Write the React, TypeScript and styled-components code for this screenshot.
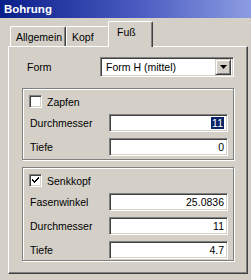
import React from "react";
import styled, { createGlobalStyle } from "styled-components";

const FACE = "#d4d0c8";
const SHADOW = "#808080";
const DARK = "#404040";

const GlobalStyle = createGlobalStyle`
  body {
    margin: 0;
    background: ${FACE};
    font-family: "Liberation Sans", Arial, sans-serif;
    font-size: 10.5px;
    color: #000;
  }
`;

const Window = styled.div`
  width: 251px;
  height: 280px;
  display: flex;
  flex-direction: column;
  background: ${FACE};
  overflow: hidden;
`;

const TitleBar = styled.div`
  height: 18px;
  display: flex;
  align-items: center;
  padding-left: 4px;
  background: linear-gradient(90deg, #0a1e8a 0%, #4a5cc0 55%, #8c9ce2 100%);
  color: #fff;
  font-weight: bold;
  font-size: 11.5px;
`;

const Body = styled.div`
  padding: 3px 3px 0 8px;
  display: flex;
  flex-direction: column;
`;

const TabRow = styled.div`
  display: flex;
  align-items: flex-end;
  height: 25px;
  padding-left: 2px;
  position: relative;
  z-index: 1;
`;

const Tab = styled.div<{ $active?: boolean; $width: number }>`
  width: ${(p) => p.$width}px;
  height: ${(p) => (p.$active ? 26 : 20)}px;
  margin: ${(p) => (p.$active ? "0 -2px -1px -2px" : "0")};
  padding: ${(p) => (p.$active ? "4px 0 0 8px" : "0 0 0 5px")};
  display: flex;
  align-items: ${(p) => (p.$active ? "flex-start" : "center")};
  box-sizing: border-box;
  background: ${FACE};
  border-top: 1px solid #fff;
  border-left: 1px solid #fff;
  border-right: 1px solid ${DARK};
  box-shadow: inset -1px 0 0 ${SHADOW}, inset 1px 1px 0 ${FACE};
  border-radius: 2px 2px 0 0;
`;

const Panel = styled.div`
  height: 228px;
  box-sizing: border-box;
  border-top: 1px solid #fff;
  border-left: 1px solid #fff;
  border-right: 1px solid ${DARK};
  border-bottom: 1px solid ${DARK};
  box-shadow: inset -1px -1px 0 ${SHADOW};
  padding: 10px 13px 0 13px;
  display: flex;
  flex-direction: column;
`;

const FormRow = styled.div`
  display: flex;
  align-items: center;
  justify-content: space-between;
  padding-left: 5px;
  margin-bottom: 11px;
`;

const Sunken = styled.div`
  box-sizing: border-box;
  background: #fff;
  border-top: 1px solid ${SHADOW};
  border-left: 1px solid ${SHADOW};
  border-right: 1px solid #fff;
  border-bottom: 1px solid #fff;
  box-shadow: inset 1px 1px 0 ${DARK}, inset -1px -1px 0 ${FACE};
`;

const Select = styled(Sunken)`
  width: 134px;
  height: 20px;
  display: flex;
  align-items: center;
  padding: 2px 2px 2px 5px;
`;

const SelectText = styled.span`
  flex: 1;
`;

const DropButton = styled.div`
  width: 16px;
  height: 16px;
  box-sizing: border-box;
  background: ${FACE};
  border-top: 1px solid ${FACE};
  border-left: 1px solid ${FACE};
  border-right: 1px solid ${DARK};
  border-bottom: 1px solid ${DARK};
  box-shadow: inset 1px 1px 0 #fff, inset -1px -1px 0 ${SHADOW};
  display: flex;
  align-items: center;
  justify-content: center;
`;

const Group = styled.div<{ $bottom: number }>`
  box-sizing: border-box;
  border: 1px solid ${SHADOW};
  box-shadow: inset 1px 1px 0 #fff, 1px 1px 0 #fff;
  padding: 6px 5px ${(p) => p.$bottom}px 7px;
  display: flex;
  flex-direction: column;
  gap: 6px;
  & + & {
    margin-top: 7px;
  }
`;

const CheckRow = styled.label`
  display: flex;
  align-items: center;
  gap: 5px;
  height: 13px;
  margin-left: -1px;
`;

const CheckBox = styled(Sunken)`
  width: 13px;
  height: 13px;
  display: flex;
  align-items: center;
  justify-content: center;
`;

const FieldRow = styled.div`
  display: flex;
  align-items: center;
  justify-content: space-between;
  height: 18px;
`;

const Field = styled(Sunken)`
  width: 119px;
  height: 18px;
  display: flex;
  align-items: center;
  justify-content: flex-end;
  padding-right: 3px;
`;

const Selected = styled.span`
  background: #0a246a;
  color: #fff;
  padding: 0 1px;
`;

const Check = () => (
  <svg width="7" height="7" viewBox="0 0 7 7">
    <path d="M0 2h1v1h1v1h1V3h1V2h1V1h1V0h1v2H6v1H5v1H4v1H3v1H2V5H1V4H0z" fill="#000" />
  </svg>
);

const Arrow = () => (
  <svg width="7" height="4" viewBox="0 0 7 4">
    <path d="M0 0h7L3.5 4z" fill="#000" />
  </svg>
);

type Row = { label: string; value: string; selected?: boolean };

const zapfen: Row[] = [
  { label: "Durchmesser", value: "11", selected: true },
  { label: "Tiefe", value: "0" },
];

const senkkopf: Row[] = [
  { label: "Fasenwinkel", value: "25.0836" },
  { label: "Durchmesser", value: "11" },
  { label: "Tiefe", value: "4.7" },
];

function Fields({ rows }: { rows: Row[] }) {
  return (
    <>
      {rows.map((r) => (
        <FieldRow key={r.label}>
          <span>{r.label}</span>
          <Field>{r.selected ? <Selected>{r.value}</Selected> : r.value}</Field>
        </FieldRow>
      ))}
    </>
  );
}

export default function App() {
  return (
    <>
      <GlobalStyle />
      <Window>
        <TitleBar>Bohrung</TitleBar>
        <Body>
          <TabRow>
            <Tab $width={56}>Allgemein</Tab>
            <Tab $width={44}>Kopf</Tab>
            <Tab $width={45} $active>
              Fuß
            </Tab>
          </TabRow>
          <Panel>
            <FormRow>
              <span>Form</span>
              <Select>
                <SelectText>Form H (mittel)</SelectText>
                <DropButton>
                  <Arrow />
                </DropButton>
              </Select>
            </FormRow>
            <Group $bottom={3}>
              <CheckRow>
                <CheckBox />
                Zapfen
              </CheckRow>
              <Fields rows={zapfen} />
            </Group>
            <Group $bottom={1}>
              <CheckRow>
                <CheckBox>
                  <Check />
                </CheckBox>
                Senkkopf
              </CheckRow>
              <Fields rows={senkkopf} />
            </Group>
          </Panel>
        </Body>
      </Window>
    </>
  );
}
